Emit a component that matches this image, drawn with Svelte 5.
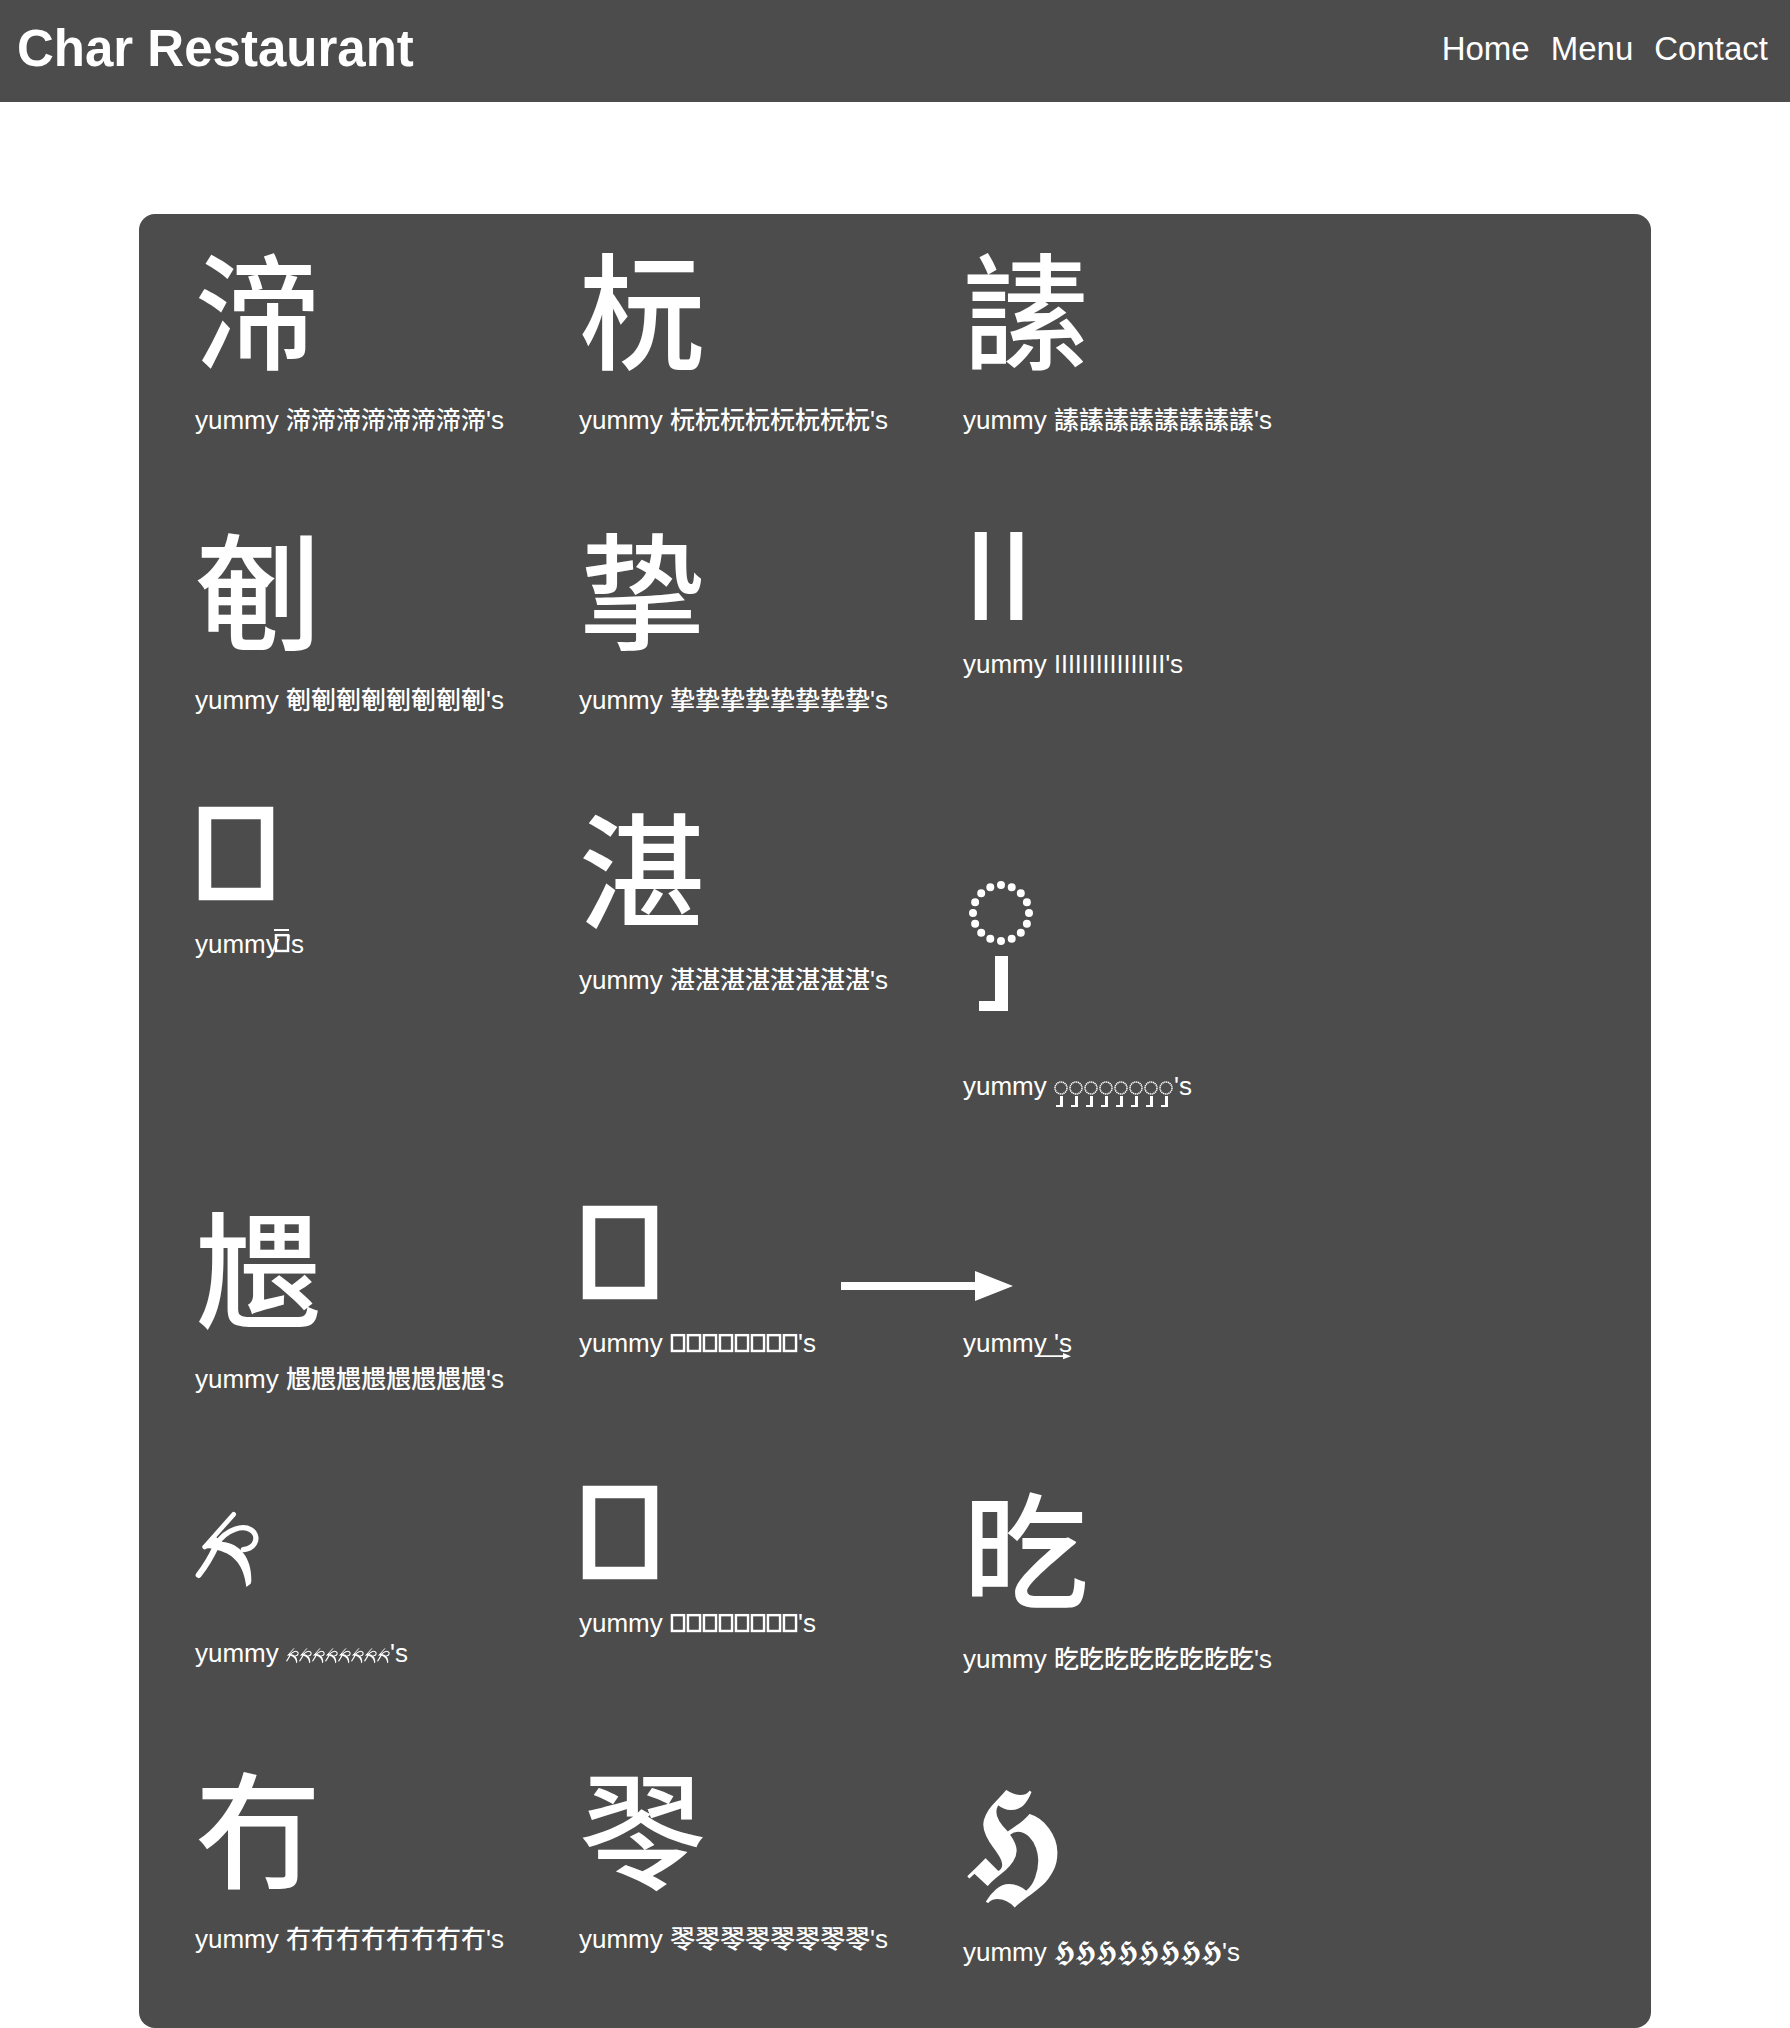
<script>
  const links = ['Home', 'Menu', 'Contact'];

  // A dish is either a typed character or one of the drawn symbols below.
  const dishes = [
    { char: '渧', kind: 'han' },
    { char: '杬', kind: 'han' },
    { char: '䛾', kind: 'han' },
    { char: '剦', kind: 'han' },
    { char: '挚', kind: 'han' },
    { char: 'II', kind: 'latin' },
    { symbol: 'box', kind: 'stacked' },
    { char: '湛', kind: 'han' },
    { symbol: 'ring', kind: 'deep' },
    { char: '㞇', kind: 'han' },
    { symbol: 'box', kind: 'latin' },
    { symbol: 'arrow', kind: 'stacked' },
    { symbol: 'brush', kind: 'script' },
    { symbol: 'box', kind: 'latin' },
    { char: '㫓', kind: 'han' },
    { char: '冇', kind: 'han' },
    { char: '䎆', kind: 'han' },
    { char: '𝕳', kind: 'fraktur' }
  ];

  const eight = Array(8);
</script>

{#snippet drawing(name)}
  {#if name === 'box'}
    <svg class="box" viewBox="0 0 82 93" aria-hidden="true">
      <rect x="10" y="6" width="62" height="81" fill="none" stroke="currentColor" stroke-width="12.5" />
    </svg>
  {:else if name === 'ring'}
    <svg class="ring" viewBox="0 0 76 274" aria-hidden="true">
      <circle cx="38" cy="131" r="28" pathLength="16" fill="none" stroke="currentColor" stroke-width="8" stroke-linecap="round" stroke-dasharray="0 1" />
      <path d="M32 174h13v55H16v-10h16z" fill="currentColor" />
    </svg>
  {:else if name === 'brush'}
    <svg class="brush" viewBox="15 0 195 300" aria-hidden="true">
      <g fill="none" stroke="currentColor" stroke-linecap="round" stroke-linejoin="round">
        <path d="M131 40L44 138" stroke-width="14" />
        <path d="M78 136Q56 184 26 222" stroke-width="18" />
        <path d="M80 128C112 82 160 72 182 86C208 102 202 140 160 146" stroke-width="16" />
      </g>
      <path d="M38 134L78 108L96 122C150 126 186 172 184 240L182 248L169 258C162 196 134 160 84 148Q62 138 40 144z" fill="currentColor" />
    </svg>
  {:else}
    <svg class="arrow" viewBox="0 0 172 30" aria-hidden="true">
      <path d="M0 11H134V0L172 15L134 30V19H0z" fill="currentColor" />
    </svg>
  {/if}
{/snippet}

{#snippet smallRing()}
  <svg class="ring-small" viewBox="0 0 15 30" aria-hidden="true">
    <circle cx="7" cy="9" r="6" pathLength="20" fill="none" stroke="currentColor" stroke-width="1.5" stroke-dasharray="0.7 0.3" />
    <path d="M6 17h3v11H2v-2h4z" fill="currentColor" />
  </svg>
{/snippet}

<header>
  <h1>Char Restaurant</h1>
  <nav>
    {#each links as link}
      <a href="#{link.toLowerCase()}">{link}</a>
    {/each}
  </nav>
</header>

<main>
  <ul>
    {#each dishes as dish}
      <li class={dish.kind}>
        <div class="glyph">
          {#if dish.char}{dish.char}{:else}{@render drawing(dish.symbol)}{/if}
        </div>
        {#if dish.kind === 'stacked'}
          <p>yummy<span class="stack {dish.symbol}-stack">{@render drawing(dish.symbol)}</span> 's</p>
        {:else if dish.char}
          <p>yummy <span class="run">{dish.char.repeat(8)}</span>'s</p>
        {:else if dish.symbol === 'ring'}
          <p>yummy <span class="run">{#each eight as _}{@render smallRing()}{/each}</span>'s</p>
        {:else}
          <p>yummy <span class="run">{#each eight as _}{@render drawing(dish.symbol)}{/each}</span>'s</p>
        {/if}
      </li>
    {/each}
  </ul>
</main>

<style>
  :global(body) {
    margin: 0;
    background: #fff;
    font-family: 'Liberation Sans', 'Noto Sans CJK SC', sans-serif;
    color: #fff;
  }

  header {
    display: flex;
    align-items: center;
    justify-content: space-between;
    padding: 20px 22px 24px 17px;
    background: #4c4c4c;
  }

  h1 {
    margin: 0;
    font-size: 51px;
    line-height: 58px;
  }

  nav {
    display: flex;
    gap: 21px;
  }

  a {
    color: inherit;
    font-size: 33px;
    line-height: 40px;
    text-decoration: none;
  }

  main {
    margin: 112px 139px 0;
    border-radius: 16px;
    background: #4c4c4c;
  }

  ul {
    display: grid;
    grid-template-columns: repeat(auto-fill, 384px);
    margin: 0;
    padding: 0 56px;
    list-style: none;
  }

  li {
    padding: 8px 0 56px;
  }

  .glyph {
    position: relative;
    height: 144px;
    font-size: 128px;
    line-height: 148px;
  }

  p {
    margin: 0;
    font-size: 26px;
    line-height: 36px;
    white-space: nowrap;
  }

  .run {
    font-size: 25px;
    font-weight: 500;
  }

  svg {
    display: block;
    overflow: visible;
  }

  .han .glyph {
    height: 180px;
    font-size: 126px;
    font-weight: 500;
    line-height: 190px;
  }

  .script .glyph {
    height: 174px;
  }

  .deep .glyph {
    height: 273px;
  }

  .deep p {
    line-height: 62px;
  }

  .fraktur .glyph {
    height: 191px;
    font-size: 140px;
    line-height: 191px;
  }

  .fraktur p {
    line-height: 40px;
  }

  .fraktur .run {
    font-size: 29px;
    line-height: 1;
  }

  .glyph .box {
    width: 82px;
    padding-top: 25px;
  }

  .glyph .ring {
    width: 76px;
  }

  .glyph .brush {
    width: 65px;
    padding-top: 40px;
  }

  .glyph .arrow {
    position: absolute;
    top: 90px;
    left: -122px;
    width: 172px;
  }

  .run svg {
    display: inline-block;
  }

  .run .box {
    width: 16px;
  }

  .run .brush {
    width: 13px;
    vertical-align: -4px;
  }

  .ring-small {
    width: 15px;
    height: 30px;
    vertical-align: -14px;
  }

  .stack {
    position: relative;
  }

  .stack svg {
    position: absolute;
  }

  .box-stack svg {
    right: -11px;
    bottom: 7px;
    width: 16px;
  }

  .box-stack::after {
    content: '';
    position: absolute;
    right: -10px;
    bottom: 28px;
    width: 15px;
    height: 2px;
    background: currentColor;
  }

  .arrow-stack svg {
    left: -12px;
    bottom: -1px;
    width: 36px;
  }
</style>
